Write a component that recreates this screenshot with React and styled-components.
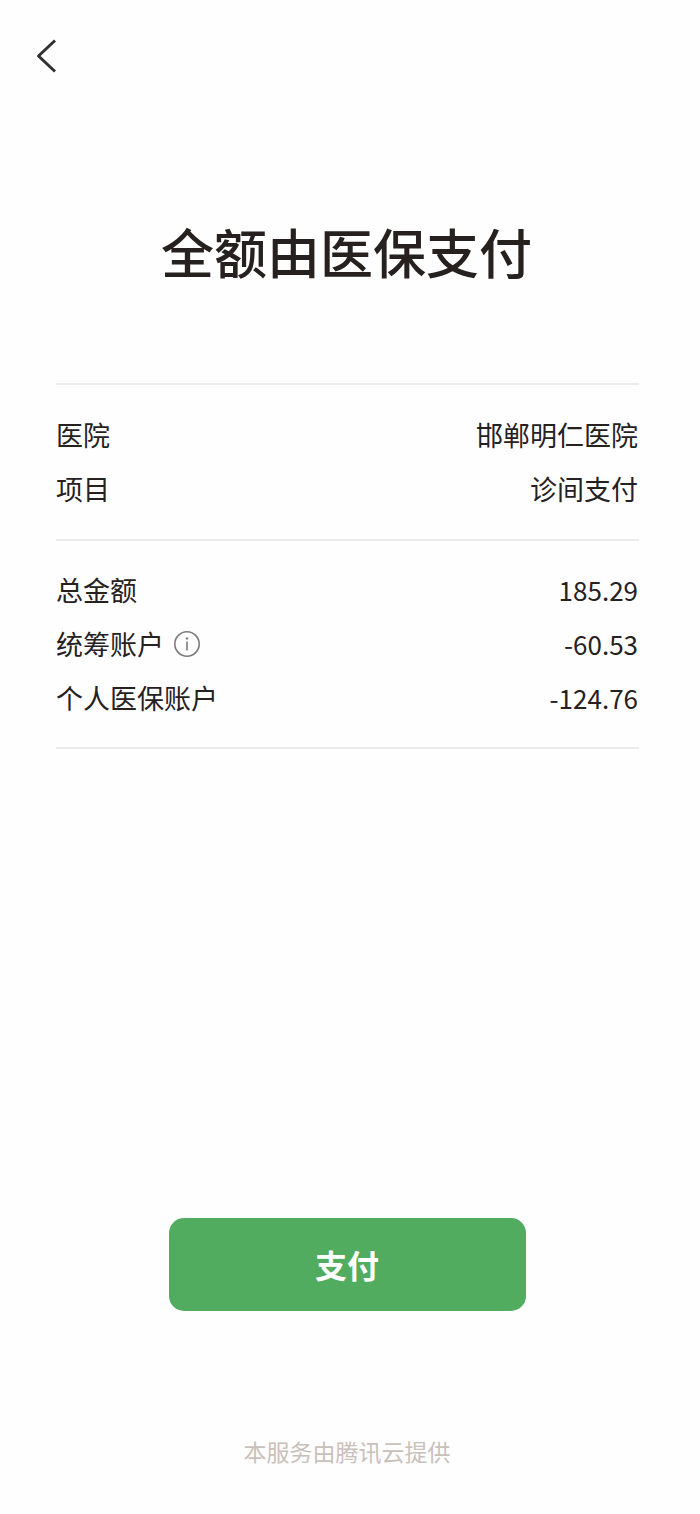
import React from 'react';
import styled, { createGlobalStyle } from 'styled-components';

const GlobalStyle = createGlobalStyle`
  * {
    box-sizing: border-box;
  }

  body {
    margin: 0;
    background: #fefefe;
    color: #26211f;
    font-family: 'Noto Sans CJK SC', sans-serif;
  }

  button {
    padding: 0;
    border: 0;
    background: none;
    font-family: inherit;
    cursor: pointer;
  }
`;

const Page = styled.div`
  min-height: 100vh;
  display: flex;
  flex-direction: column;
`;

const Header = styled.header`
  padding: 38px 36px 0;
`;

const IconButton = styled.button`
  && {
    display: block;
    color: ${(props) => props.$color};
  }

  svg {
    display: block;
  }
`;

const Title = styled.h1`
  margin: 137px 0 0;
  padding-right: 7px;
  font-size: 53px;
  line-height: 80px;
  font-weight: 500;
  text-align: center;
`;

const Details = styled.main`
  margin: 92px 61px 0 56px;
  border-top: 2px solid #ebebeb;
`;

const Group = styled.dl`
  margin: 0;
  padding: ${(props) => props.$space} 0;
  border-bottom: 2px solid #ebebeb;
`;

const Row = styled.div`
  display: flex;
  align-items: center;
  justify-content: space-between;
  height: 54px;
  padding-right: 1px;
  font-size: 27px;
  line-height: 54px;
`;

const Label = styled.dt`
  display: flex;
  align-items: center;
  gap: 9px;
`;

const Value = styled.dd`
  margin: 0;
`;

const Amount = styled(Value)`
  font-size: 26px;
`;

const Footer = styled.footer`
  margin-top: auto;
  padding: 0 6px 43px 0;
  display: flex;
  flex-direction: column;
  align-items: center;
`;

const PayButton = styled.button`
  && {
    width: 51vw;
    height: 93px;
    padding-bottom: 2px;
    border-radius: 15px;
    background: #52ac60;
    color: #fff;
    font-size: 32px;
    font-weight: 700;
  }
`;

const Provider = styled.p`
  margin: 120px 0 0;
  color: #cac0ba;
  font-size: 23px;
  line-height: 40px;
`;

const App = () => (
  <>
    <GlobalStyle />
    <Page>
      <Header>
        <IconButton $color="#303030" aria-label="返回">
          <svg
            width="22"
            height="36"
            viewBox="0 0 22 36"
            fill="none"
            stroke="currentColor"
            strokeWidth="3"
            strokeLinejoin="round"
          >
            <path d="M19 2.5 2.5 18 19 33.5" />
          </svg>
        </IconButton>
      </Header>
      <Title>全额由医保支付</Title>
      <Details>
        <Group $space="23px">
          <Row>
            <Label>医院</Label>
            <Value>邯郸明仁医院</Value>
          </Row>
          <Row>
            <Label>项目</Label>
            <Value>诊间支付</Value>
          </Row>
        </Group>
        <Group $space="22px">
          <Row>
            <Label>总金额</Label>
            <Amount>185.29</Amount>
          </Row>
          <Row>
            <Label>
              统筹账户
              <IconButton $color="#7d7978" aria-label="统筹账户说明">
                <svg
                  width="28"
                  height="28"
                  viewBox="0 0 28 28"
                  fill="none"
                  stroke="currentColor"
                  strokeWidth="1.6"
                >
                  <circle cx="14" cy="14" r="12.2" />
                  <path d="M14 11.5v9" />
                  <circle cx="14" cy="8.4" r="1.2" fill="currentColor" stroke="none" />
                </svg>
              </IconButton>
            </Label>
            <Amount>-60.53</Amount>
          </Row>
          <Row>
            <Label>个人医保账户</Label>
            <Amount>-124.76</Amount>
          </Row>
        </Group>
      </Details>
      <Footer>
        <PayButton>支付</PayButton>
        <Provider>本服务由腾讯云提供</Provider>
      </Footer>
    </Page>
  </>
);

export default App;
